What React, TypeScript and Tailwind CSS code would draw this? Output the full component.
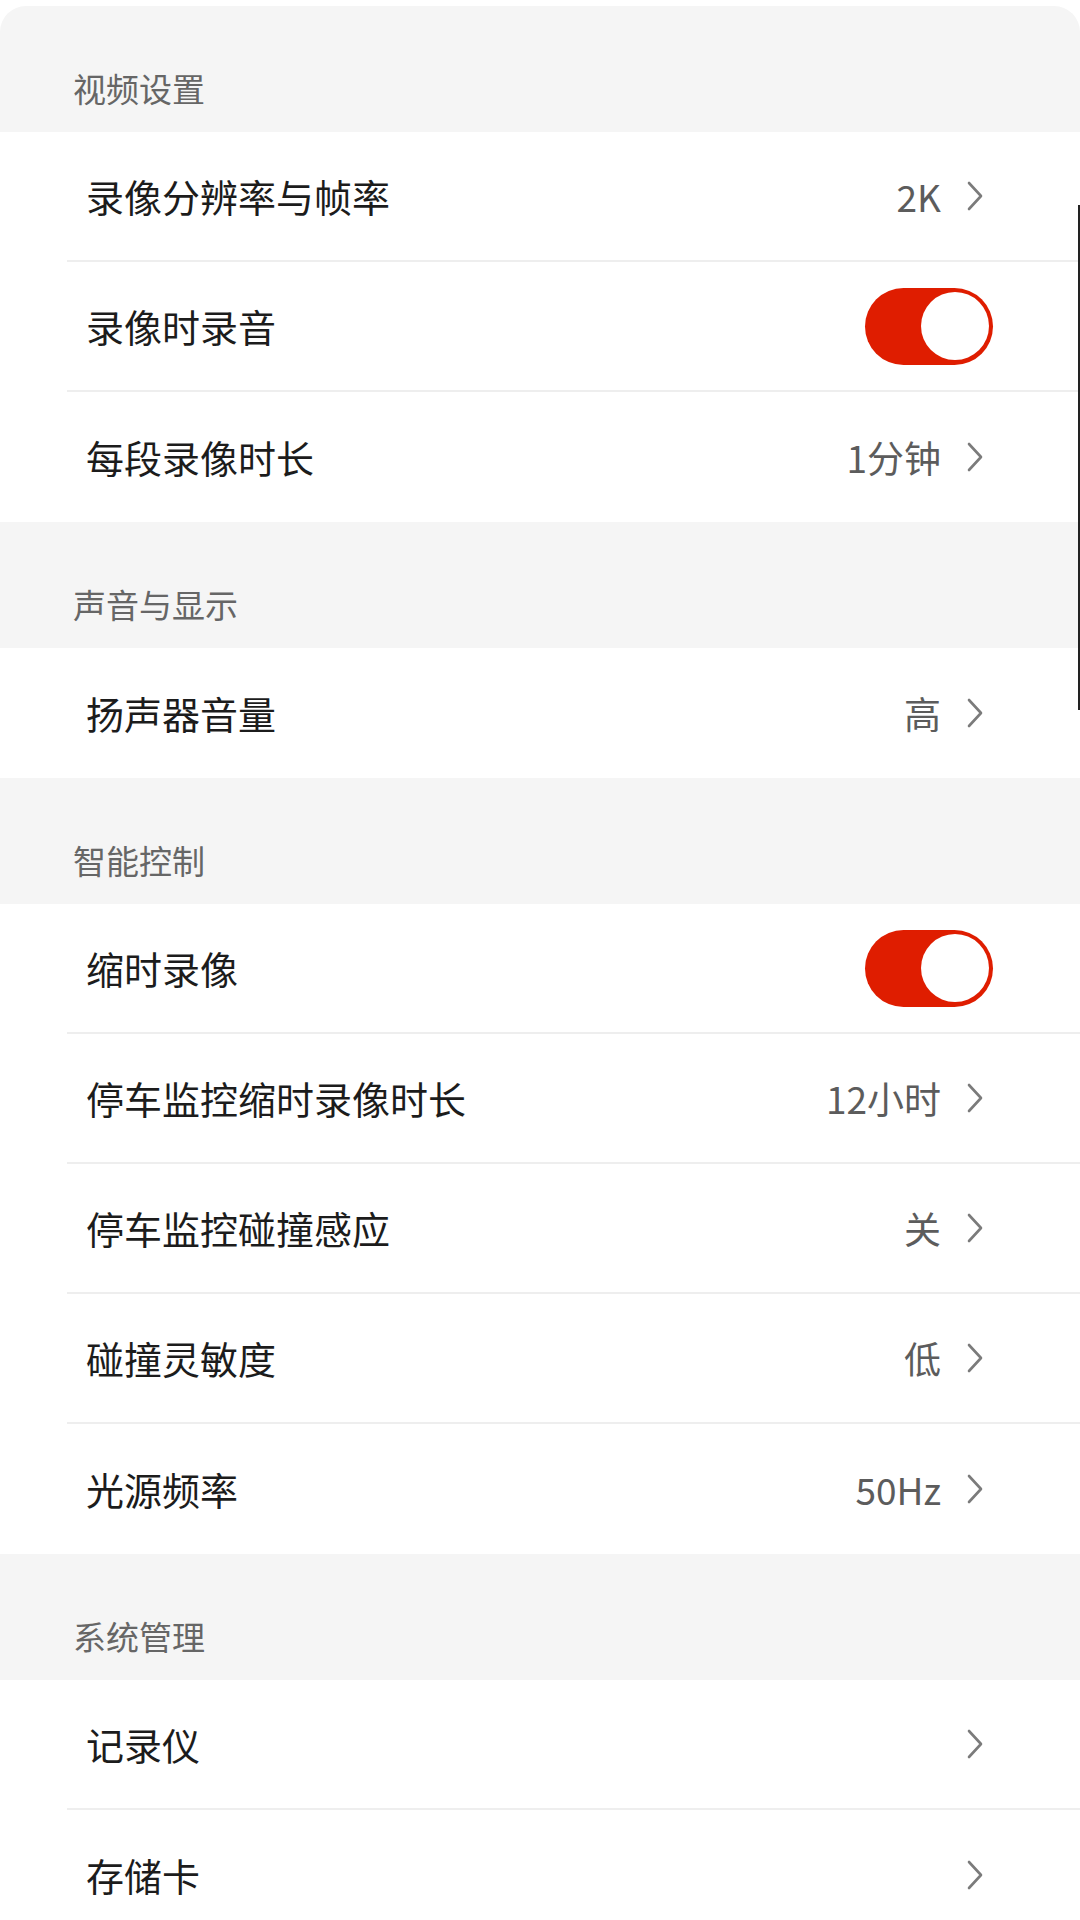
import { Fragment } from 'react'

type Item = { label: string; value?: string; toggle?: boolean }
type Section = { title: string; items: Item[] }

const sections: Section[] = [
  {
    title: '视频设置',
    items: [
      { label: '录像分辨率与帧率', value: '2K' },
      { label: '录像时录音', toggle: true },
      { label: '每段录像时长', value: '1分钟' },
    ],
  },
  {
    title: '声音与显示',
    items: [{ label: '扬声器音量', value: '高' }],
  },
  {
    title: '智能控制',
    items: [
      { label: '缩时录像', toggle: true },
      { label: '停车监控缩时录像时长', value: '12小时' },
      { label: '停车监控碰撞感应', value: '关' },
      { label: '碰撞灵敏度', value: '低' },
      { label: '光源频率', value: '50Hz' },
    ],
  },
  {
    title: '系统管理',
    items: [{ label: '记录仪' }, { label: '存储卡' }],
  },
]

function Chevron() {
  return (
    <svg width="16" height="30" viewBox="0 0 16 30" fill="none" className="shrink-0">
      <polyline points="2,2 14,15 2,28" stroke="#7b7b7b" strokeWidth="2.6" strokeLinecap="round" strokeLinejoin="round" />
    </svg>
  )
}

function Toggle() {
  return (
    <div className="-mr-[10px] flex h-[77px] w-[128px] shrink-0 items-center justify-end rounded-full bg-[#df1d00] pr-[4px]">
      <div className="h-[68px] w-[68px] rounded-full bg-white" />
    </div>
  )
}

function Row({ item, last }: { item: Item; last: boolean }) {
  return (
    <div className="bg-white pl-[67px]">
      <div
        className={`flex h-[130px] items-center justify-between pl-[19px] pr-[97px] ${last ? '' : 'border-b-2 border-[#eeeeee]'}`}
      >
        <span className="text-[38px] leading-none text-[#1c1c1c]">{item.label}</span>
        {item.toggle ? (
          <Toggle />
        ) : (
          <div className="flex items-center gap-[26px]">
            {item.value && <span className="text-[37px] leading-none text-[#5c5c5c]">{item.value}</span>}
            <Chevron />
          </div>
        )}
      </div>
    </div>
  )
}

export default function App() {
  return (
    <div
      className="relative h-[1920px] w-[1080px] overflow-hidden bg-white pt-[6px]"
      style={{ fontFamily: '"Noto Sans CJK SC", "Noto Sans", sans-serif' }}
    >
      <div className="overflow-hidden rounded-t-[26px] bg-[#f5f5f5]">
        {sections.map((s) => (
          <Fragment key={s.title}>
            <div className="h-[126px] pl-[73px] pt-[64px] text-[33px] leading-[36px] text-[#666666]">{s.title}</div>
            {s.items.map((it, i) => (
              <Row key={it.label} item={it} last={i === s.items.length - 1} />
            ))}
          </Fragment>
        ))}
      </div>
      {/* scroll indicator */}
      <div className="absolute right-0 top-[205px] h-[505px] w-[2px] bg-[#222222]" />
    </div>
  )
}
